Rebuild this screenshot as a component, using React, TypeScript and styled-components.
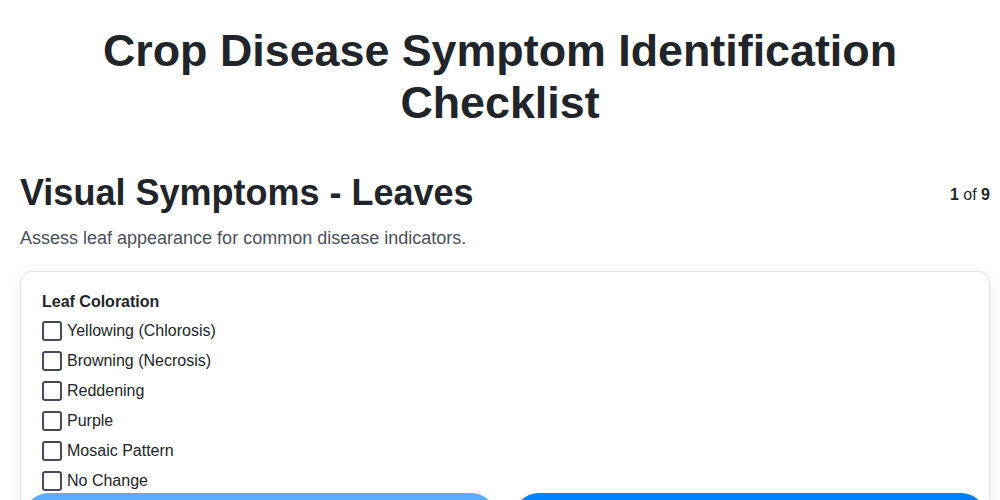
import React from "react";
import styled, { createGlobalStyle } from "styled-components";

const Global = createGlobalStyle`
  html, body { margin: 0; padding: 0; background: #ffffff; }
  body { font-family: "Liberation Sans", Arial, sans-serif; color: #222831; }
  * { box-sizing: border-box; }
`;

const Page = styled.div`
  padding: 25px 0 0 0;
`;

const Title = styled.h1`
  margin: 0;
  padding: 0 20px;
  text-align: center;
  font-size: 44.8px;
  line-height: 1.15;
  font-weight: 700;
  color: #212529;
`;

const Content = styled.main`
  padding: 0 10px 0 20px;
`;

const StepHeader = styled.div`
  display: flex;
  justify-content: space-between;
  align-items: center;
  margin-top: 43px;
`;

const StepTitle = styled.h2`
  margin: 0;
  font-size: 36px;
  line-height: 1.2;
  font-weight: 700;
  color: #212529;
`;

const Counter = styled.div`
  font-size: 16px;
  color: #212529;
  padding-top: 5px;
  b { font-weight: 700; }
`;

const Description = styled.p`
  margin: 14px 0 22px;
  font-size: 18px;
  line-height: 1.15;
  color: #4a4f5c;
`;

const Card = styled.div`
  border: 1px solid #e4e4ec;
  border-radius: 12px;
  box-shadow: 0 4px 14px rgba(0, 0, 0, 0.08);
  padding: 21px 2px 0;
  background: #fff;
`;

const Group = styled.fieldset`
  border: 0;
  margin: 0;
  padding: 0 19px;
  display: flex;
  flex-direction: column;
  gap: 10px;
`;

const GroupLabel = styled.div`
  font-size: 16px;
  line-height: 18px;
  font-weight: 700;
  color: #212529;
`;

const Option = styled.label`
  display: flex;
  align-items: center;
  gap: 5px;
  height: 20px;
  font-size: 16px;
  color: #212529;
`;

const Box = styled.span`
  width: 20px;
  height: 20px;
  border: 2px solid #474b5c;
  border-radius: 3px;
  background: #fff;
  flex: none;
`;

const Nav = styled.div`
  display: grid;
  grid-template-columns: 1fr 1fr;
  gap: 16px;
  margin-top: 2px;
`;

const NavButton = styled.button<{ $primary?: boolean }>`
  height: 56px;
  padding: 16px;
  border: 0;
  border-radius: 26px;
  background: ${(p) => (p.$primary ? "#0081ff" : "#5aacff")};
  color: #fff;
  font-family: inherit;
  font-size: 16px;
  font-weight: 700;
  display: flex;
  align-items: flex-end;
  justify-content: center;
`;

const options = [
  "Yellowing (Chlorosis)",
  "Browning (Necrosis)",
  "Reddening",
  "Purple",
  "Mosaic Pattern",
  "No Change",
];

export default function App() {
  return (
    <>
      <Global />
      <Page>
        <Title>Crop Disease Symptom Identification Checklist</Title>
        <Content>
          <StepHeader>
            <StepTitle>Visual Symptoms - Leaves</StepTitle>
            <Counter>
              <b>1</b> of <b>9</b>
            </Counter>
          </StepHeader>
          <Description>Assess leaf appearance for common disease indicators.</Description>
          <Card>
            <Group>
              <GroupLabel>Leaf Coloration</GroupLabel>
              {options.map((o) => (
                <Option key={o}>
                  <Box />
                  {o}
                </Option>
              ))}
            </Group>
            <Nav>
              <NavButton>Previous</NavButton>
              <NavButton $primary>Next</NavButton>
            </Nav>
          </Card>
        </Content>
      </Page>
    </>
  );
}
